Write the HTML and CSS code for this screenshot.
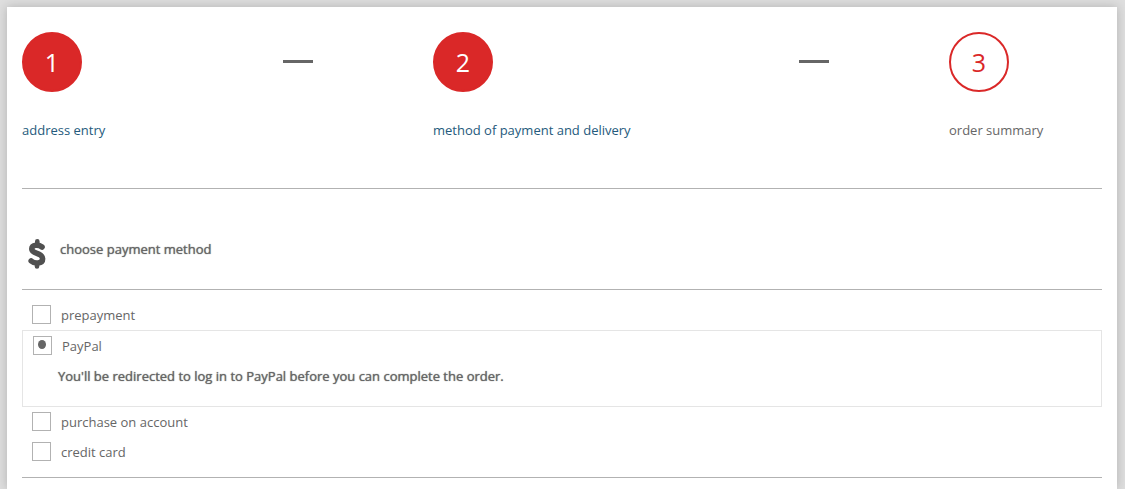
FILE: index.html
```
<!DOCTYPE html>
<html lang="en">
<head>
  <meta charset="UTF-8">
  <title>Checkout</title>
  <link rel="stylesheet" href="styles.css">
</head>
<body>
  <main class="page">
    <ol class="steps">
      <li class="step">
        <span class="number done">1</span>
        <a href="#address">address entry</a>
      </li>
      <li class="dash"></li>
      <li class="step">
        <span class="number done">2</span>
        <a href="#payment">method of payment and delivery</a>
      </li>
      <li class="dash"></li>
      <li class="step">
        <span class="number">3</span>
        <span>order summary</span>
      </li>
    </ol>

    <form class="payment" id="payment">
      <header class="payment-header">
        <svg class="dollar" viewBox="0 0 18 30" aria-hidden="true">
          <path d="M9.300 2.300V5M9 25V27.500" stroke-width="4.600"/>
          <path d="M14 8C11 5.500 3.800 5 3.800 10C3.800 15.300 14.600 13.700 14.600 19.700C14.600 25 6.500 25 3.200 22" stroke-width="5.600"/>
        </svg>
        <h1>choose payment method</h1>
      </header>

      <div class="option">
        <input type="radio" name="method" id="prepayment">
        <label for="prepayment">prepayment</label>
      </div>
      <div class="selected">
        <div class="option">
          <input type="radio" name="method" id="paypal" checked>
          <label for="paypal">PayPal</label>
        </div>
        <p>You'll be redirected to log in to PayPal before you can complete the order.</p>
      </div>
      <div class="option">
        <input type="radio" name="method" id="account">
        <label for="account">purchase on account</label>
      </div>
      <div class="option">
        <input type="radio" name="method" id="card">
        <label for="card">credit card</label>
      </div>
    </form>
  </main>
</body>
</html>
```
FILE: styles.css
```
* {
  box-sizing: border-box;
}
body {
  display: flex;
  min-height: 100vh;
  margin: 0;
  padding: 7px 8px 0 7px;
  background-color: #dedede;
  color: #666;
  font-family: "Open Sans", sans-serif;
  font-size: 13px;
  line-height: 20px;
}
.page {
  flex: 1;
  padding: 25px 15px 0;
  background-color: #fff;
  box-shadow: 0 0 10px rgba(0, 0, 0, 0.2);
}

/* checkout progress */
.steps {
  display: grid;
  grid-template-columns: 261fr 150px 366fr 150px 153fr;
  margin: 0;
  padding: 0 0 48px;
  border-bottom: 1px solid #b2b2b2;
  list-style: none;
}
.step {
  display: flex;
  flex-direction: column;
  align-items: flex-start;
  gap: 28px;
}
.step a {
  color: #245a7c;
  text-decoration: none;
}
.number {
  display: flex;
  align-items: center;
  justify-content: center;
  width: 60px;
  height: 60px;
  border: 2px solid #da2828;
  border-radius: 50%;
  color: #da2828;
  font-size: 25px;
}
.done {
  background-color: #da2828;
  color: #fff;
}
.dash {
  width: 30px;
  height: 3px;
  margin-top: 28px;
  background-color: #666;
}

/* payment methods */
.payment {
  padding-bottom: 10px;
  border-bottom: 1px solid #b2b2b2;
}
.payment-header {
  display: flex;
  gap: 14px;
  margin-bottom: 10px;
  padding: 50px 0 20px 6px;
  border-bottom: 1px solid #b2b2b2;
}
.dollar {
  width: 18px;
  height: 30px;
  fill: none;
  stroke: #505050;
  stroke-linecap: round;
}
h1 {
  margin: 0;
  font-size: 13px;
}
h1,
.selected p {
  font-weight: 400;
  text-shadow: 0 0 1px #666;
}
.option {
  display: flex;
  align-items: flex-start;
  gap: 10px;
  height: 30px;
  padding: 5px 0 0 10px;
}
.option input {
  display: grid;
  place-items: start center;
  width: 19px;
  height: 19px;
  margin: 0;
  padding: 3px 1px 0 0;
  border: 1px solid #b2b2b2;
  background-color: #fff;
  appearance: none;
}
.option input:checked::before {
  content: "";
  width: 8px;
  height: 9px;
  border-radius: 50%;
  background-color: #666;
}
.selected {
  border: 1px solid #e5e5e5;
}
.selected p {
  margin: 0;
  padding: 5px 35px 20px;
}
```
